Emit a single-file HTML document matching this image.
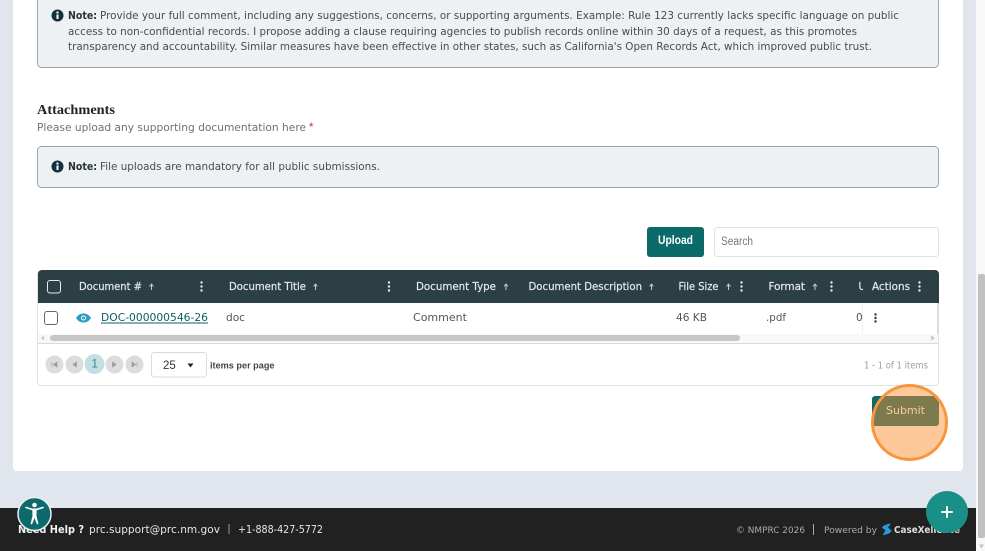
<!DOCTYPE html>
<html lang="en"><head><meta charset="utf-8"><title>Attachments</title>
<style>
html,body{margin:0;padding:0;width:985px;height:551px;overflow:hidden;background:#e1e6ee}
svg{display:block;position:absolute;left:0;top:0}
text{font-family:"DejaVu Sans",sans-serif;white-space:pre}
.l{font-family:"Liberation Sans",sans-serif}
.b{font-size:10.5px;fill:#474c50}
.nb{font-size:10.5px;fill:#263238;font-weight:700}
.h{font-size:10.2px;fill:#e4eaec;stroke:#e4eaec;stroke-width:.2px}
.c{font-size:10.5px;fill:#555}
</style></head><body>
<svg width="985" height="551" viewBox="0 0 985 551" xmlns="http://www.w3.org/2000/svg">
<rect width="985" height="551" fill="#e1e6ee"/>
<rect x="13" y="-10" width="950" height="481" rx="4" fill="#fff"/>

<!-- note 1 -->
<rect x="37.5" y="-10" width="901" height="77.5" rx="4" fill="#eef1f3" stroke="#98a4a9"/>
<circle cx="57.500" cy="15.500" r="6" fill="#12303f"/><rect x="56.500" y="14.500" width="2" height="4.500" fill="#fff"/><rect x="56.500" y="11.500" width="2" height="2" fill="#fff"/>
<text class="nb" x="68" y="19" textLength="29" lengthAdjust="spacingAndGlyphs">Note:</text>
<text class="b" x="100" y="19" textLength="799" lengthAdjust="spacingAndGlyphs">Provide your full comment, including any suggestions, concerns, or supporting arguments. Example: Rule 123 currently lacks specific language on public</text>
<text class="b" x="68" y="35" textLength="789" lengthAdjust="spacingAndGlyphs">access to non-confidential records. I propose adding a clause requiring agencies to publish records online within 30 days of a request, as this promotes</text>
<text class="b" x="68" y="50" textLength="804" lengthAdjust="spacingAndGlyphs">transparency and accountability. Similar measures have been effective in other states, such as California's Open Records Act, which improved public trust.</text>

<!-- attachments -->
<text x="37" y="114" font-size="14" font-weight="700" fill="#222" style="font-family:'Liberation Serif',serif" textLength="78" lengthAdjust="spacingAndGlyphs">Attachments</text>
<text x="37" y="131" font-size="10.500" fill="#6d7275" textLength="269" lengthAdjust="spacingAndGlyphs">Please upload any supporting documentation here</text>
<text class="l" x="309" y="131" font-size="11.500" fill="#d32f3f">*</text>

<!-- note 2 -->
<rect x="37.5" y="146.500" width="901" height="41" rx="4" fill="#eef1f3" stroke="#98a4a9"/>
<circle cx="57.500" cy="166.500" r="6" fill="#12303f"/><rect x="56.500" y="165.500" width="2" height="4.500" fill="#fff"/><rect x="56.500" y="162.500" width="2" height="2" fill="#fff"/>
<text class="nb" x="68" y="170" textLength="29" lengthAdjust="spacingAndGlyphs">Note:</text>
<text class="b" x="100" y="170" textLength="280" lengthAdjust="spacingAndGlyphs">File uploads are mandatory for all public submissions.</text>

<!-- upload / search -->
<rect x="647" y="227" width="57" height="30" rx="3" fill="#0b6a6a"/>
<text class="l" x="658" y="244" font-size="11.500" font-weight="700" fill="#fff" textLength="35" lengthAdjust="spacingAndGlyphs">Upload</text>
<rect x="714.500" y="227.500" width="224" height="29" rx="3" fill="#fff" stroke="#e0e3e6"/>
<text class="l" x="721" y="245" font-size="11.500" fill="#777" textLength="32" lengthAdjust="spacingAndGlyphs">Search</text>

<!-- table -->
<rect x="37.500" y="270.500" width="901" height="115" rx="4" fill="#fff" stroke="#dfe3e6"/>
<path d="M38 303V274a4 4 0 0 1 4-4H935a4 4 0 0 1 4 4V303Z" fill="#2b3f45"/>
<rect x="47.500" y="280.500" width="13" height="12.500" rx="2.500" fill="none" stroke="#e6ebec"/>

<text class="h" x="79" y="290" textLength="63" lengthAdjust="spacingAndGlyphs">Document #</text>
<path d="M151.500 290v-5.500M149.500 286.500l2-2.500 2 2.500" fill="none" stroke="#c4ced1"/>
<g fill="#e4eaec"><circle cx="201.500" cy="282.500" r="1.200"/><circle cx="201.500" cy="286.500" r="1.200"/><circle cx="201.500" cy="290.500" r="1.200"/></g>
<text class="h" x="229" y="290" textLength="77" lengthAdjust="spacingAndGlyphs">Document Title</text>
<path d="M315.500 290v-5.500M313.500 286.500l2-2.500 2 2.500" fill="none" stroke="#c4ced1"/>
<g fill="#e4eaec"><circle cx="389" cy="282.500" r="1.200"/><circle cx="389" cy="286.500" r="1.200"/><circle cx="389" cy="290.500" r="1.200"/></g>
<text class="h" x="416" y="290" textLength="80" lengthAdjust="spacingAndGlyphs">Document Type</text>
<path d="M506 290v-5.500M504 286.500l2-2.500 2 2.500" fill="none" stroke="#c4ced1"/>
<text class="h" x="528.500" y="290" textLength="113.500" lengthAdjust="spacingAndGlyphs">Document Description</text>
<path d="M651.500 290v-5.500M649.500 286.500l2-2.500 2 2.500" fill="none" stroke="#c4ced1"/>
<text class="h" x="678.500" y="290" textLength="40" lengthAdjust="spacingAndGlyphs">File Size</text>
<path d="M728.500 290v-5.500M726.500 286.500l2-2.500 2 2.500" fill="none" stroke="#c4ced1"/>
<g fill="#e4eaec"><circle cx="741.500" cy="282.500" r="1.200"/><circle cx="741.500" cy="286.500" r="1.200"/><circle cx="741.500" cy="290.500" r="1.200"/></g>
<text class="h" x="768.500" y="290" textLength="36.500" lengthAdjust="spacingAndGlyphs">Format</text>
<path d="M815 290v-5.500M813 286.500l2-2.500 2 2.500" fill="none" stroke="#c4ced1"/>
<g fill="#e4eaec"><circle cx="831.500" cy="282.500" r="1.200"/><circle cx="831.500" cy="286.500" r="1.200"/><circle cx="831.500" cy="290.500" r="1.200"/></g>
<text class="h" x="858.500" y="290">U</text>
<rect x="863" y="270" width="5" height="33" fill="#2b3f45"/>
<text class="h" x="872" y="290" textLength="38" lengthAdjust="spacingAndGlyphs">Actions</text>
<g fill="#e4eaec"><circle cx="919.500" cy="282.500" r="1.200"/><circle cx="919.500" cy="286.500" r="1.200"/><circle cx="919.500" cy="290.500" r="1.200"/></g>

<!-- row -->
<rect x="44.500" y="311.500" width="13" height="13" rx="2.500" fill="#fff" stroke="#666"/>
<path d="M76 318c2-3.200 4.500-4.500 7.500-4.500s5.500 1.300 7.500 4.500c-2 3.200-4.500 4.500-7.500 4.500S78 321.200 76 318Z" fill="#2a9fc4"/>
<circle cx="83.500" cy="318" r="2.500" fill="#fff"/><circle cx="83.500" cy="318" r="1.500" fill="#2a9fc4"/>
<text x="101" y="321" font-size="10.500" fill="#0c5f63" textLength="107" lengthAdjust="spacingAndGlyphs">DOC-000000546-26</text>
<rect x="101" y="322.500" width="107" height="1" fill="#0c5f63"/>
<text class="c" x="226" y="321" textLength="19" lengthAdjust="spacingAndGlyphs">doc</text>
<text class="c" x="413" y="321" textLength="54" lengthAdjust="spacingAndGlyphs">Comment</text>
<text class="c" x="676" y="321" textLength="31" lengthAdjust="spacingAndGlyphs">46 KB</text>
<text class="c" x="766" y="321" textLength="20" lengthAdjust="spacingAndGlyphs">.pdf</text>
<text class="c" x="856" y="321">0</text>
<rect x="863" y="303" width="75" height="31" fill="#fff"/>
<rect x="862" y="303" width="1" height="31" fill="#eef0f1"/>
<rect x="937" y="303" width="1.500" height="31" fill="#d8dadb"/>
<g fill="#333"><circle cx="875.500" cy="314.500" r="1.200"/><circle cx="875.500" cy="318" r="1.200"/><circle cx="875.500" cy="321.500" r="1.200"/></g>

<!-- h scrollbar -->
<rect x="38" y="334" width="900" height="9" fill="#f8f8f8"/>
<rect x="50" y="335" width="690" height="6" rx="3" fill="#c6c6c6"/>
<path d="M44 335.500v5l-3-2.500Z" fill="#c8c8c8"/><path d="M931 335.500v5l4-2.500Z" fill="#c8c8c8"/>
<rect x="38" y="343" width="900" height="1" fill="#d7dbdd"/>

<!-- pagination -->
<g fill="#dcdcdc"><circle cx="54.500" cy="364.500" r="9"/><circle cx="74.500" cy="364.500" r="9"/><circle cx="114.500" cy="364.500" r="9"/><circle cx="134.500" cy="364.500" r="9"/></g>
<circle cx="94.500" cy="364" r="10" fill="#c4dfe3"/>
<text class="l" x="91.500" y="367.500" font-size="11.500" fill="#2f8a90">1</text>
<path d="M52 362v5M57 362v5l-3.500-2.500ZM76.500 362v5l-3.500-2.500ZM112.500 362v5l3.500-2.500ZM132 362v5l3.500-2.500ZM137 362v5" fill="#9a9a9a" stroke="#9a9a9a" stroke-width=".6"/>
<rect x="151.500" y="352.500" width="55" height="24.500" rx="3" fill="#fff" stroke="#d8dadb"/>
<text class="l" x="163" y="369" font-size="11.500" fill="#333">25</text>
<path d="M187.500 363.500h6l-3 4Z" fill="#222"/>
<text class="l" x="210" y="368.500" font-size="9.500" font-weight="700" fill="#444" textLength="64.500" lengthAdjust="spacingAndGlyphs">items per page</text>
<text x="864" y="368.500" font-size="9.800" fill="#9a9fa2" textLength="64" lengthAdjust="spacingAndGlyphs">1 - 1 of 1 items</text>

<!-- submit -->
<rect x="872" y="396" width="67" height="30" rx="3" fill="#0b6a6a"/>
<text x="886" y="414" font-size="10.500" fill="#fff" textLength="39" lengthAdjust="spacingAndGlyphs">Submit</text>
<circle cx="909.500" cy="422.500" r="37" fill="rgba(250,142,47,.48)" stroke="#f7963c" stroke-width="3"/>

<!-- footer -->
<rect x="0" y="508" width="977" height="43" fill="#212121"/>
<text x="18" y="533" font-size="10.500" font-weight="700" fill="#f2f2f2" textLength="66" lengthAdjust="spacingAndGlyphs">Need Help ?</text>
<text x="89" y="533" font-size="10.500" fill="#e6e6e6" textLength="131" lengthAdjust="spacingAndGlyphs">prc.support@prc.nm.gov</text>
<rect x="228.500" y="524" width="1" height="10" fill="#999"/>
<text x="238" y="533" font-size="10.500" fill="#e6e6e6" textLength="85" lengthAdjust="spacingAndGlyphs">+1-888-427-5772</text>
<text x="736" y="533" font-size="9" fill="#aaa" textLength="69" lengthAdjust="spacingAndGlyphs">© NMPRC 2026</text>
<rect x="813" y="524" width="1" height="11" fill="#aaa"/>
<text x="824" y="533" font-size="9" fill="#aaa" textLength="53" lengthAdjust="spacingAndGlyphs">Powered by</text>
<path d="M882 527.500c1-2 4-3.500 9-4l-3 4 3.500 3c-.5 2.500-4 4-9 4.500l3-4.500Z" fill="#2a97dd"/>
<text x="894" y="533" font-size="9.500" font-weight="700" fill="#ddd" textLength="66" lengthAdjust="spacingAndGlyphs">CaseXellence</text>

<!-- accessibility -->
<circle cx="34.500" cy="514" r="16.500" fill="#0c6a6c" stroke="#e8f1f1" stroke-width="1.500"/>
<circle cx="34.500" cy="505" r="2.300" fill="#fff"/>
<path d="M26 507.500l6 1.800h5l6-1.800" fill="none" stroke="#fff" stroke-width="1.600" stroke-linecap="round" stroke-linejoin="round"/>
<path d="M32.300 509.500h4.400l-.2 6.500 2 8-1.500.4-2.500-6.400-2.500 6.400-1.500-.4 2-8Z" fill="#fff"/>

<!-- fab -->
<circle cx="947" cy="512" r="21" fill="#1a8f87"/>
<path d="M947 507v10M942 512h10" stroke="#fff" stroke-width="2" stroke-linecap="round"/>

<!-- page scrollbar -->
<rect x="976" y="0" width="9" height="551" fill="#f8f8f8"/>
<rect x="978" y="274" width="7" height="264" rx="2" fill="#c1c1c1"/>
<path d="M979 544.500h5l-2.500 4Z" fill="#c1c1c1"/>
</svg>
</body></html>
